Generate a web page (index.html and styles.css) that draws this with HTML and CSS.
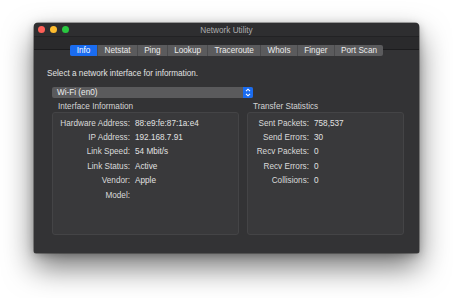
FILE: index.html
```html
<!DOCTYPE html>
<html lang="en">
<head>
  <meta charset="UTF-8" />
  <title>Network Utility</title>
  <link rel="stylesheet" href="styles.css">
</head>
<body>
  <div class="window">
    <div class="titlebar">
      <div class="lights">
        <span class="light red"></span>
        <span class="light yellow"></span>
        <span class="light green"></span>
      </div>
      <div class="title">Network Utility</div>
    </div>
    <div class="toolbar"></div>

    <div class="content">
      <div class="tabs">
        <span class="tab active">Info</span>
        <span class="tab">Netstat</span>
        <span class="tab">Ping</span>
        <span class="tab">Lookup</span>
        <span class="tab">Traceroute</span>
        <span class="tab">WhoIs</span>
        <span class="tab">Finger</span>
        <span class="tab">Port Scan</span>
      </div>

      <p class="prompt">Select a network interface for information.</p>

      <div class="popup">
        <span>Wi-Fi (en0)</span>
        <span class="stepper">
          <svg width="6" height="9" viewBox="0 0 6 9">
            <path d="M1 3.2 L3 1.2 L5 3.2 M1 5.8 L3 7.8 L5 5.8" fill="none" stroke="#fff" stroke-width="1.1"/>
          </svg>
        </span>
      </div>

      <div class="groups">
        <div class="group">
          <div class="group-title">Interface Information</div>
          <div class="box">
            <div class="rows info-rows">
              <span class="label">Hardware Address:</span><span>88:e9:fe:87:1a:e4</span>
              <span class="label">IP Address:</span><span>192.168.7.91</span>
              <span class="label">Link Speed:</span><span>54 Mbit/s</span>
              <span class="label">Link Status:</span><span>Active</span>
              <span class="label">Vendor:</span><span>Apple</span>
              <span class="label">Model:</span><span></span>
            </div>
          </div>
        </div>
        <div class="group right">
          <div class="group-title">Transfer Statistics</div>
          <div class="box">
            <div class="rows stats-rows">
              <span class="label">Sent Packets:</span><span>758,537</span>
              <span class="label">Send Errors:</span><span>30</span>
              <span class="label">Recv Packets:</span><span>0</span>
              <span class="label">Recv Errors:</span><span>0</span>
              <span class="label">Collisions:</span><span>0</span>
            </div>
          </div>
        </div>
      </div>
    </div>
  </div>
</body>
</html>
```

FILE: styles.css
```css
html {
  background: #ffffff;
}
body {
  margin: 0;
  padding: 23px 0 0 34px;
  min-height: 298px;
  box-sizing: border-box;
  font-family: "Liberation Sans", Arial, sans-serif;
  font-size: 8.2px;
  color: #e2e2e2;
}
.window {
  width: 385px;
  height: 230px;
  display: flex;
  flex-direction: column;
  background: #333335;
  border-radius: 4px 4px 2px 2px;
  overflow: hidden;
  box-shadow: 0 14px 30px rgba(0, 0, 0, 0.55), 0 2px 8px rgba(0, 0, 0, 0.25), 0 0 0 0.5px rgba(0, 0, 0, 0.6);
}
.titlebar {
  height: 13px;
  position: relative;
  background: #2e2e30;
  display: flex;
  align-items: center;
  justify-content: center;
}
.lights {
  position: absolute;
  left: 4px;
  top: 3px;
  display: flex;
  gap: 5px;
}
.light {
  width: 7px;
  height: 7px;
  border-radius: 50%;
}
.red { background: #fe5f57; }
.yellow { background: #febc2e; }
.green { background: #29c840; }
.title {
  color: #adadaf;
  margin-top: 1px;
}
.toolbar {
  height: 12px;
  background: #2a2a2c;
  border-top: 1px solid #222224;
  border-bottom: 1px solid #1c1c1e;
}
.content {
  flex: 1;
  padding: 0 15px 18px 18px;
  display: flex;
  flex-direction: column;
}
.tabs {
  align-self: center;
  display: flex;
  margin-top: -5px;
  margin-right: 3px;
  height: 11px;
  background: #5b5b5d;
  border-radius: 2px;
}
.tab {
  line-height: 11px;
  padding: 0 6.3px;
  color: #ececec;
  border-left: 1px solid #4a4a4c;
}
.tab:first-child {
  border-left: none;
  border-radius: 2px 0 0 2px;
}
.tab.active {
  background: #1a6cf0;
  color: #ffffff;
  padding: 0 7px;
}
.prompt {
  margin: 13px 0 0 -5px;
  line-height: 10px;
}
.popup {
  margin-top: 8px;
  width: 201px;
  height: 11px;
  display: flex;
  align-items: center;
  justify-content: space-between;
  background: #5a5a5c;
  border-radius: 2px;
  padding-left: 5px;
  box-sizing: border-box;
  color: #ececec;
}
.stepper {
  width: 10px;
  height: 11px;
  background: #1a6cf0;
  border-radius: 0 2px 2px 0;
  display: flex;
  align-items: center;
  justify-content: center;
}
.groups {
  flex: 1;
  display: flex;
  gap: 8px;
  margin-top: 4px;
}
.group {
  width: 187px;
  display: flex;
  flex-direction: column;
}
.group.right {
  width: 157px;
}
.group-title {
  line-height: 10px;
  margin-left: 6px;
  color: #d4d4d4;
}
.box {
  flex: 1;
  background: #39393b;
  border: 1px solid #444446;
  border-radius: 3px;
}
.rows {
  display: grid;
  column-gap: 5px;
  grid-auto-rows: 14.4px;
  align-items: center;
  padding-top: 3px;
}
.info-rows {
  grid-template-columns: 77px 1fr;
}
.stats-rows {
  grid-template-columns: 61px 1fr;
}
.label {
  text-align: right;
  color: #dadada;
}
```
